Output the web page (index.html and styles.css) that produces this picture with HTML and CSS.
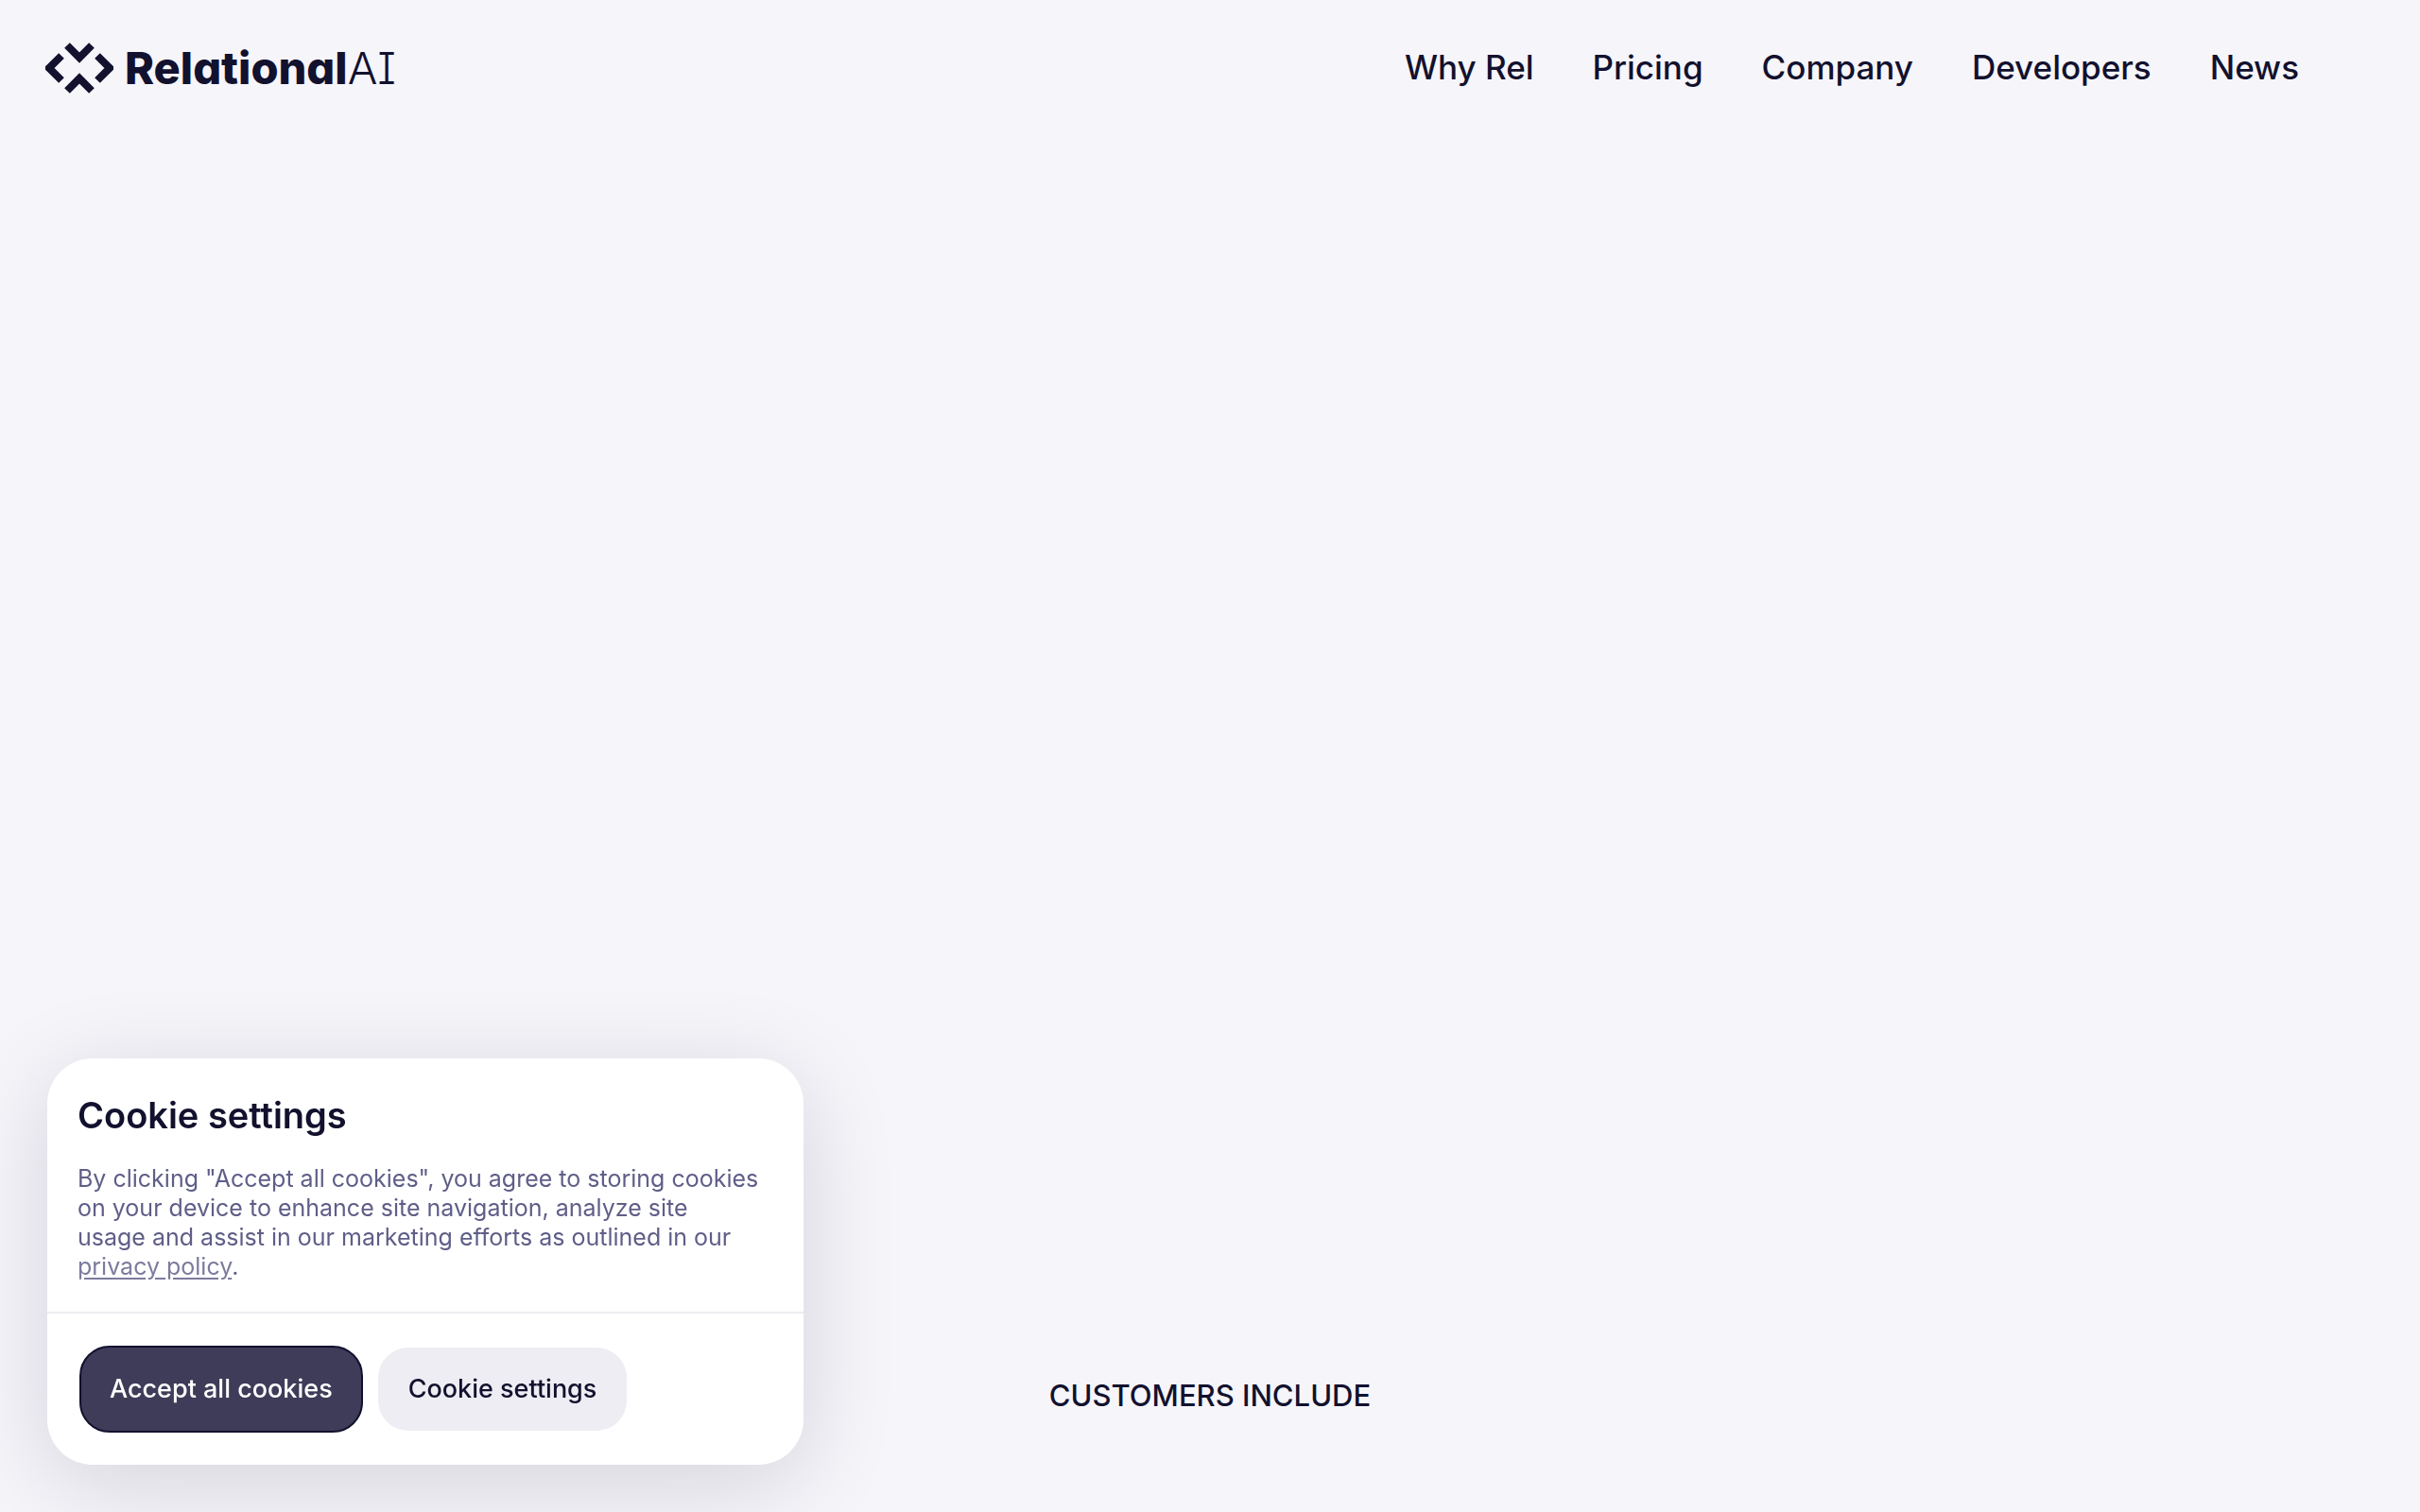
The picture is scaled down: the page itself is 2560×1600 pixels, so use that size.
FILE: index.html
```html
<!DOCTYPE html>
<html lang="en">
<head>
<meta charset="utf-8">
<title>RelationalAI</title>
<link rel="stylesheet" href="styles.css">
</head>
<body>
<header class="header">
  <a class="logo" href="#" aria-label="RelationalAI">
    <svg class="logo-mark" viewBox="0 0 72 54" aria-hidden="true">
      <g fill="none" stroke="currentColor" stroke-width="8">
        <path d="M23 3 36 16 49 3"/>
        <path d="M23 51 36 38 49 51"/>
        <path d="M17 14 4 27 17 40"/>
        <path d="M55 14 68 27 55 40"/>
      </g>
    </svg>
    <span class="logo-text">Relational<span class="logo-ai">AI</span></span>
  </a>
  <nav class="nav">
    <a href="#">Why Rel</a>
    <a href="#">Pricing</a>
    <a href="#">Company</a>
    <a href="#">Developers</a>
    <a href="#">News</a>
  </nav>
  <svg class="dots" viewBox="0 0 1 102" aria-hidden="true">
    <path fill="#fff" d="M0 0h1v1H0zM0 14h1v1H0zM0 28h1v1H0zM0 62h1v1H0zM0 76h1v1H0zM0 90h1v1H0zM0 101h1v1H0z"/>
  </svg>
</header>
<main class="main">
  <h2 class="customers">CUSTOMERS INCLUDE</h2>
</main>
<section class="cookies" aria-labelledby="cookies-title">
  <div class="cookies-body">
    <h2 class="cookies-title" id="cookies-title">Cookie settings</h2>
    <p class="cookies-text">By clicking "Accept all cookies", you agree to storing cookies<br>on your device to enhance site navigation, analyze site<br>usage and assist in our marketing efforts as outlined in our<br><a href="#">privacy policy</a>.</p>
  </div>
  <div class="cookies-actions">
    <button class="button button-primary" type="button">Accept all cookies</button>
    <button class="button" type="button">Cookie settings</button>
  </div>
</section>
</body>
</html>
```
FILE: styles.css
```css
* { box-sizing: border-box; }

body {
  margin: 0;
  min-height: 100vh;
  display: flex;
  flex-direction: column;
  background: #f6f5fa;
  color: #12112e;
  font-family: Inter, "Liberation Sans", sans-serif;
}

.header {
  position: relative;
  display: flex;
  align-items: center;
  justify-content: space-between;
  padding: 40px 128px 0 48px;
}

.logo {
  display: flex;
  align-items: center;
  gap: 12px;
  color: inherit;
  text-decoration: none;
}

.logo-mark {
  width: 72px;
  height: 54px;
}

.logo-text {
  font-size: 47px;
  font-weight: 800;
  line-height: 64px;
  font-feature-settings: "cv11", "cv08";
}

.logo-ai { font-weight: 300; }

.nav {
  display: flex;
  gap: 62px;
  padding-bottom: 2px;
}

.nav a {
  color: inherit;
  font-size: 35px;
  font-weight: 500;
  line-height: 60px;
  text-decoration: none;
}

.dots {
  position: absolute;
  top: 25px;
  right: 15px;
  width: 1px;
  height: 102px;
}

.main {
  flex: 1;
  display: flex;
  align-items: flex-end;
  justify-content: center;
  padding-bottom: 103px;
}

.customers {
  margin: 0;
  font-size: 31px;
  font-weight: 500;
  line-height: 40px;
}

.cookies {
  position: fixed;
  left: 50px;
  bottom: 50px;
  width: 800px;
  border-radius: 48px;
  background: #fff;
  box-shadow: 0 20px 100px rgba(18, 17, 46, 0.14);
}

.cookies-body {
  padding: 36px 32px 32px;
  border-bottom: 2px solid #ececf1;
}

.cookies-title {
  margin: 0 0 28px;
  font-size: 38px;
  font-weight: 600;
  line-height: 48px;
}

.cookies-text {
  margin: 0;
  color: #5f5e88;
  font-size: 25px;
  line-height: 31px;
}

.cookies-text a {
  color: #7c7b9e;
  text-underline-offset: 3px;
}

.cookies-actions {
  display: flex;
  align-items: center;
  gap: 16px;
  padding: 34px;
}

.button {
  height: 88px;
  padding: 0 32px 2px;
  border: 0;
  border-radius: 32px;
  background: #eeedf3;
  color: #12112e;
  font: 500 27px Inter, "Liberation Sans", sans-serif;
}

.button-primary {
  height: 92px;
  padding: 0 30px 2px;
  border: 2px solid #12112e;
  background: #3e3c58;
  color: #fff;
}
```
